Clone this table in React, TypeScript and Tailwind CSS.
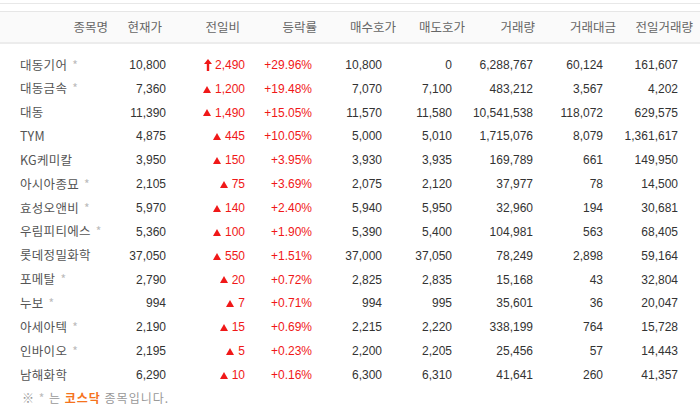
import React from 'react';

type Row = {
  name: string;
  kosdaq?: boolean;
  price: string;
  change: string;
  upper?: boolean;
  rate: string;
  bid: string;
  ask: string;
  volume: string;
  amount: string;
  prevVolume: string;
};

const rows: Row[] = [
  { name: '대동기어', kosdaq: true, price: '10,800', change: '2,490', upper: true, rate: '+29.96%', bid: '10,800', ask: '0', volume: '6,288,767', amount: '60,124', prevVolume: '161,607' },
  { name: '대동금속', kosdaq: true, price: '7,360', change: '1,200', rate: '+19.48%', bid: '7,070', ask: '7,100', volume: '483,212', amount: '3,567', prevVolume: '4,202' },
  { name: '대동', price: '11,390', change: '1,490', rate: '+15.05%', bid: '11,570', ask: '11,580', volume: '10,541,538', amount: '118,072', prevVolume: '629,575' },
  { name: 'TYM', price: '4,875', change: '445', rate: '+10.05%', bid: '5,000', ask: '5,010', volume: '1,715,076', amount: '8,079', prevVolume: '1,361,617' },
  { name: 'KG케미칼', price: '3,950', change: '150', rate: '+3.95%', bid: '3,930', ask: '3,935', volume: '169,789', amount: '661', prevVolume: '149,950' },
  { name: '아시아종묘', kosdaq: true, price: '2,105', change: '75', rate: '+3.69%', bid: '2,075', ask: '2,120', volume: '37,977', amount: '78', prevVolume: '14,500' },
  { name: '효성오앤비', kosdaq: true, price: '5,970', change: '140', rate: '+2.40%', bid: '5,940', ask: '5,950', volume: '32,960', amount: '194', prevVolume: '30,681' },
  { name: '우림피티에스', kosdaq: true, price: '5,360', change: '100', rate: '+1.90%', bid: '5,390', ask: '5,400', volume: '104,981', amount: '563', prevVolume: '68,405' },
  { name: '롯데정밀화학', price: '37,050', change: '550', rate: '+1.51%', bid: '37,000', ask: '37,050', volume: '78,249', amount: '2,898', prevVolume: '59,164' },
  { name: '포메탈', kosdaq: true, price: '2,790', change: '20', rate: '+0.72%', bid: '2,825', ask: '2,835', volume: '15,168', amount: '43', prevVolume: '32,804' },
  { name: '누보', kosdaq: true, price: '994', change: '7', rate: '+0.71%', bid: '994', ask: '995', volume: '35,601', amount: '36', prevVolume: '20,047' },
  { name: '아세아텍', kosdaq: true, price: '2,190', change: '15', rate: '+0.69%', bid: '2,215', ask: '2,220', volume: '338,199', amount: '764', prevVolume: '15,728' },
  { name: '인바이오', kosdaq: true, price: '2,195', change: '5', rate: '+0.23%', bid: '2,200', ask: '2,205', volume: '25,456', amount: '57', prevVolume: '14,443' },
  { name: '남해화학', price: '6,290', change: '10', rate: '+0.16%', bid: '6,300', ask: '6,310', volume: '41,641', amount: '260', prevVolume: '41,357' },
];

const grid = 'grid grid-cols-[120px_55px_80px_70px_75px_70px_70px_80px_80px]';
const kr = "font-['Noto_Sans_CJK_KR',sans-serif]";
const num = "font-['Liberation_Sans','Noto_Sans_CJK_KR',sans-serif]";

const UpArrow = () => (
  <svg width="8" height="12" viewBox="0 0 8 12" className="inline-block mr-[3px] mb-[2px]">
    <path d="M4 0 L8 5 L5.2 5 L5.2 12 L2.8 12 L2.8 5 L0 5 Z" fill="#f01818" />
  </svg>
);

const Triangle = () => (
  <svg width="8" height="7" viewBox="0 0 8 7" className="inline-block mr-[4px] mb-[1px]">
    <path d="M4 0 L8 7 L0 7 Z" fill="#f01818" />
  </svg>
);

export default function App() {
  return (
    <div className="w-[700px] h-[413px] bg-white overflow-hidden text-[12px]">
      <div className="h-[4px] border-b border-[#e8e8e8]" />
      <div className={`${grid} mt-[7px] h-[33px] items-center bg-[#fafafa] border-t border-[#e6e6e6] border-b-2 border-b-[#ececec] text-[#666] ${kr} text-[12.5px]`}>
        <div className="text-right pr-[12px]">종목명</div>
        <div className="text-right pr-[13px]">현재가</div>
        <div className="text-right pr-[15px]">전일비</div>
        <div className="text-right pr-[8px]">등락률</div>
        <div className="text-right pr-[4px]">매수호가</div>
        <div className="text-right pr-[5px]">매도호가</div>
        <div className="text-right pr-[5px]">거래량</div>
        <div className="text-right pr-[4px]">거래대금</div>
        <div className="text-right pr-[7px]">전일거래량</div>
      </div>
      <div className="pt-[9px]">
        {rows.map((r) => (
          <div key={r.name} className={`${grid} h-[23.85px] items-center text-[#333] ${num}`}>
            <div className={`pl-[20px] text-[#555] ${kr} text-[12.5px] tracking-[0.3px] whitespace-nowrap`}>
              {r.name}
              {r.kosdaq && <span className="ml-[5px] text-[#bbb] text-[12px]">*</span>}
            </div>
            <div className="text-right pr-[9px]">{r.price}</div>
            <div className="text-right pr-[10px] text-[#f01818]">
              {r.upper ? <UpArrow /> : <Triangle />}
              {r.change}
            </div>
            <div className="text-right pr-[13px] text-[#f01818]">{r.rate}</div>
            <div className="text-right pr-[18px]">{r.bid}</div>
            <div className="text-right pr-[18px]">{r.ask}</div>
            <div className="text-right pr-[7px]">{r.volume}</div>
            <div className="text-right pr-[17px]">{r.amount}</div>
            <div className="text-right pr-[22px]">{r.prevVolume}</div>
          </div>
        ))}
      </div>
      <div className={`pl-[22px] mt-[2px] text-[#999] ${kr} text-[12px] tracking-[1px]`}>
        ※ <span className="text-[#bbb]">*</span> 는 <span className="text-[#f5731d] font-semibold">코스닥</span> 종목입니다.
      </div>
    </div>
  );
}
